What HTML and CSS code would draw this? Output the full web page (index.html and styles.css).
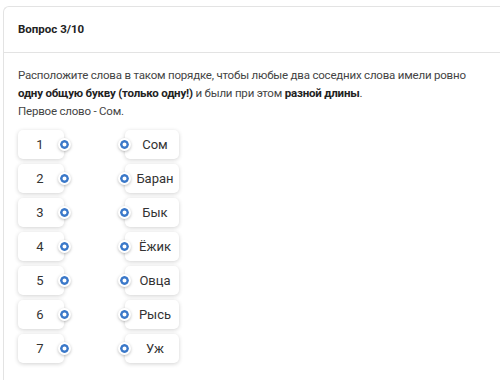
FILE: index.html
```html
<!DOCTYPE html>
<html lang="ru">
<head>
  <meta charset="UTF-8" />
  <title>Вопрос 3/10</title>
  <link rel="stylesheet" href="styles.css">
</head>
<body>

  <div class="card">
    <div class="card-head">Вопрос 3/10</div>

    <div class="card-body">
      <p class="task">
        Расположите слова в таком порядке, чтобы любые два соседних слова имели ровно
        <b>одну общую букву (только одну!)</b> и были при этом <b>разной длины</b>.<br>
        Первое слово - Сом.
      </p>

      <div class="match">
        <div class="row"><div class="num">1<i class="dot"></i></div><div class="word"><i class="dot"></i>Сом</div></div>
        <div class="row"><div class="num">2<i class="dot"></i></div><div class="word"><i class="dot"></i>Баран</div></div>
        <div class="row"><div class="num">3<i class="dot"></i></div><div class="word"><i class="dot"></i>Бык</div></div>
        <div class="row"><div class="num">4<i class="dot"></i></div><div class="word"><i class="dot"></i>Ёжик</div></div>
        <div class="row"><div class="num">5<i class="dot"></i></div><div class="word"><i class="dot"></i>Овца</div></div>
        <div class="row"><div class="num">6<i class="dot"></i></div><div class="word"><i class="dot"></i>Рысь</div></div>
        <div class="row"><div class="num">7<i class="dot"></i></div><div class="word"><i class="dot"></i>Уж</div></div>
      </div>
    </div>
  </div>

</body>
</html>
```

FILE: styles.css
```css
html,
body {
  height: 380px;
  overflow: hidden;
}

body {
  margin: 0;
  padding: 6px 0 0 3px;
  box-sizing: border-box;
  background-color: #fff;
  font-family: Roboto, "Liberation Sans", sans-serif;
  color: #333;
}

.card {
  border: 1px solid #e3e3e3;
  border-right: none;
  border-bottom: none;
  border-radius: 6px 0 0 0;
  height: 374px;
  box-sizing: border-box;
}

.card-head {
  padding: 15px 14px 0;
  height: 30px;
  font-size: 11.5px;
  font-weight: bold;
  color: #222;
  border-bottom: 1px solid #e3e3e3;
}

.card-body {
  padding: 13px 14px 0;
}

.task {
  margin: 0;
  font-size: 11.5px;
  letter-spacing: -0.2px;
  line-height: 18px;
  color: #444;
}

.task b {
  color: #222;
}

.match {
  margin-top: 10px;
  display: flex;
  flex-direction: column;
  gap: 5px;
}

.row {
  display: flex;
  align-items: center;
  height: 29px;
}

.num,
.word {
  position: relative;
  height: 29px;
  display: flex;
  align-items: center;
  justify-content: center;
  box-sizing: border-box;
  border-radius: 5px;
  background-color: #fff;
  box-shadow: 0 1px 4px rgba(0, 0, 0, 0.18);
  font-size: 13px;
  color: #333;
}

.num {
  width: 46px;
  padding-right: 2px;
}

.word {
  width: 54px;
  margin-left: 61px;
  padding-left: 6px;
}

.dot {
  position: absolute;
  top: 50%;
  width: 9px;
  height: 9px;
  margin-top: -6.5px;
  border: 2px solid #fff;
  border-radius: 50%;
  background-color: #fff;
  box-shadow: 0 1px 3px rgba(0, 0, 0, 0.25), inset 0 0 0 2.5px #3a78c9;
}

.num .dot {
  right: -7px;
}

.word .dot {
  left: -7px;
}
```
